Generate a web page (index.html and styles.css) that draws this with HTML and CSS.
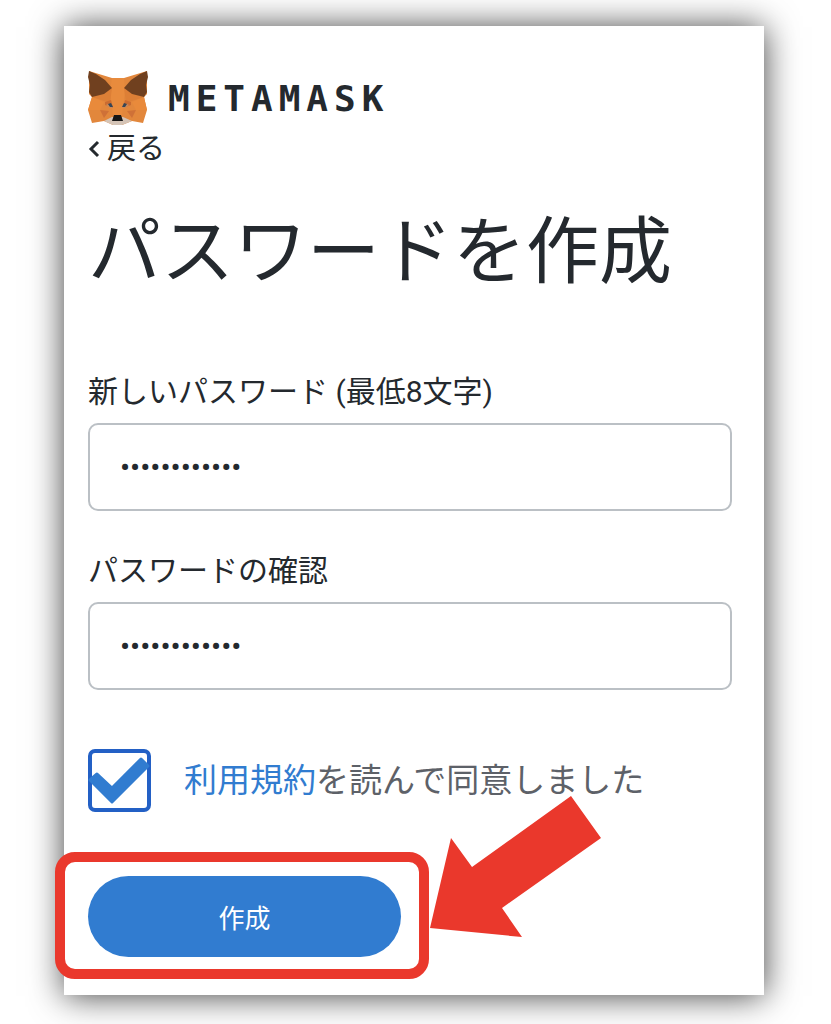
FILE: index.html
```html
<!DOCTYPE html>
<html lang="ja">
<head>
    <meta charset="UTF-8">
    <meta name="viewport" content="width=device-width, initial-scale=1.0">
    <title>MetaMask</title>
    <link rel="stylesheet" href="styles.css">
</head>
<body>

<main class="container">
    <header class="logo">
        <svg class="fox" viewBox="0 0 60 56" aria-hidden="true">
            <!-- Face -->
            <polygon fill="#e2873c" points="1,1 24,8 36,8 59,1 59,24 56,27 59,40 55,53 44,51 34,55 25,55 16,51 4,53 0,40 4,27 1,24"/>
            <polygon fill="#e88b3d" points="24,8 36,8 37,20 34,46 25,46 22,20"/>
            <polygon fill="#dd7f36" points="24,18 22,33 4,27 15,24"/>
            <polygon fill="#dd7f36" points="36,18 38,33 56,27 45,24"/>
            <!-- Ears -->
            <polygon fill="#70401f" points="1,1 8,4 17,10 24,18 16,24 4,27 1,22 2,15 0,7"/>
            <polygon fill="#70401f" points="59,1 52,4 43,10 36,18 44,24 56,27 59,22 58,15 60,7"/>
            <!-- Cheeks -->
            <polygon fill="#e98a3b" points="4,27 16,32 12,40 0,40"/>
            <polygon fill="#e98a3b" points="56,27 44,32 48,40 59,40"/>
            <polygon fill="#cf7137" points="12,40 21,41 16,48"/>
            <polygon fill="#cf7137" points="48,40 39,41 44,48"/>
            <polygon fill="#cb6c31" points="17,32 23,30 25,38 17,35"/>
            <polygon fill="#cb6c31" points="43,32 37,30 35,38 43,35"/>
            <!-- Eyes -->
            <polygon fill="#c98a5c" points="18,35 20,34 25,38 22,38"/>
            <polygon fill="#c98a5c" points="41,35 39,34 34,38 37,38"/>
            <polygon fill="#354657" points="20,34 23,33 25,37 22,37"/>
            <polygon fill="#354657" points="39,34 36,33 34,37 37,37"/>
            <!-- Muzzle -->
            <polygon fill="#d4c4b7" points="16,51 24,47 35,47 44,51 34,55 25,55"/>
            <polygon fill="#161616" points="26,45 33,45 35,51 24,51"/>
        </svg>
        <span class="wordmark">METAMASK</span>
    </header>

    <a class="back" href="#">
        <svg class="chevron" viewBox="0 0 12 18" aria-hidden="true">
            <path d="M10 2 L3 9 L10 16" fill="none" stroke="currentColor" stroke-width="3"/>
        </svg>
        戻る
    </a>

    <h1>パスワードを作成</h1>

    <form>
        <div class="field">
            <label for="newPassword">新しいパスワード (最低8文字)</label>
            <input type="password" id="newPassword" value="metamask1234">
        </div>
        <div class="field">
            <label for="confirmPassword">パスワードの確認</label>
            <input type="password" id="confirmPassword" value="metamask1234">
        </div>

        <div class="terms">
            <span class="check">
                <input type="checkbox" id="terms" checked>
                <svg class="tick" viewBox="0 0 63 63" aria-hidden="true">
                    <polygon points="9,25 24,39 53,10 60,17 24,53 2,31" fill="#317cd0" stroke="#317cd0" stroke-width="3" stroke-linejoin="round"/>
                </svg>
            </span>
            <label for="terms"><a href="#">利用規約</a>を読んで同意しました</label>
        </div>

        <div class="action">
            <button type="button">作成</button>
            <svg class="arrow" viewBox="0 0 171 141" aria-hidden="true">
                <polygon fill="#ea382c" points="0,132 21,42 42,71 141,0 171,42 72,112 92,141"/>
            </svg>
        </div>
    </form>
</main>

</body>
</html>
```
FILE: styles.css
```css
* {
    box-sizing: border-box;
}

body {
    font-family: Roboto, "Noto Sans CJK JP", sans-serif;
    margin: 0;
    padding: 26px 67px 29px 64px;
    background-color: #fff;
    color: #24292e;
}

.container {
    padding: 44px 32px 38px 24px;
    background-color: #fff;
    box-shadow: 0 1px 32px rgba(0, 0, 0, 0.75);
}

.logo {
    display: flex;
    align-items: center;
    gap: 20px;
    height: 56px;
}

.fox {
    width: 60px;
    height: 56px;
}

.wordmark {
    font-family: "DejaVu Sans Mono", monospace;
    font-size: 36px;
    font-weight: bold;
    letter-spacing: 6px;
}

.back {
    display: flex;
    align-items: center;
    gap: 7px;
    height: 46px;
    font-size: 29px;
    line-height: 46px;
    color: #24292e;
    text-decoration: none;
}

.chevron {
    width: 12px;
    height: 18px;
}

h1 {
    margin: 28px 0 66px;
    font-size: 73px;
    font-weight: normal;
    line-height: 104px;
}

.field {
    margin-bottom: 38px;
}

.field label {
    display: block;
    margin-bottom: 10px;
    font-size: 30px;
    line-height: 43px;
}

input[type="password"] {
    display: block;
    width: 100%;
    height: 88px;
    padding: 0 30px;
    border: 2px solid #bbc0c5;
    border-radius: 10px;
    background-color: #fff;
    font-family: Roboto, sans-serif;
    font-size: 30px;
    color: #24292e;
}

.terms {
    display: flex;
    align-items: center;
    gap: 33px;
    margin: 59px 0 64px;
    font-size: 33px;
    line-height: 48px;
    color: #5d6168;
}

.terms a {
    color: #317cd0;
    text-decoration: none;
}

.check {
    display: grid;
    flex: none;
    width: 63px;
    height: 63px;
}

.check input,
.tick {
    grid-area: 1 / 1;
    width: 63px;
    height: 63px;
    margin: 0;
}

.check input {
    appearance: none;
    border: 4px solid #2360c5;
    border-radius: 7px;
    background-color: #fff;
}

.tick {
    pointer-events: none;
}

.action {
    position: relative;
    width: 313px;
}

/* Red frame around the button */
.action::before {
    content: "";
    position: absolute;
    top: -24px;
    right: -28px;
    bottom: -22px;
    left: -33px;
    border: 10px solid #ea382c;
    border-radius: 20px;
    pointer-events: none;
}

.action button {
    display: block;
    width: 100%;
    height: 81px;
    border: none;
    border-radius: 41px;
    background-color: #317cd0;
    color: #fff;
    font-family: Roboto, "Noto Sans CJK JP", sans-serif;
    font-size: 26px;
    cursor: pointer;
}

.arrow {
    position: absolute;
    top: -80px;
    left: 342px;
    width: 171px;
    height: 141px;
    pointer-events: none;
}
```
